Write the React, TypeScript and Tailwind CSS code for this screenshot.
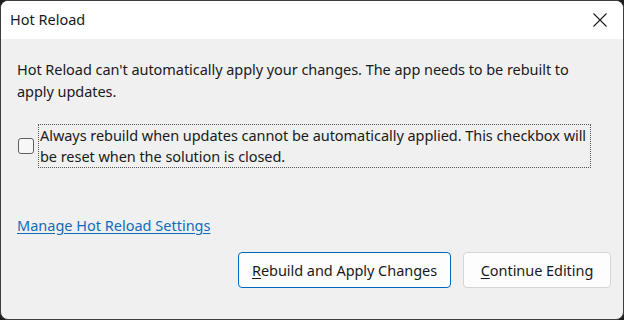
import React from "react";

const font = { fontFamily: '"Noto Sans", "Open Sans", sans-serif' };

const CloseIcon = () => (
  <svg width="16" height="16" viewBox="0 0 16 16" className="text-[#1a1a1a]">
    <path d="M1.5 1.5 L14.5 14.5 M14.5 1.5 L1.5 14.5" stroke="currentColor" strokeWidth="1.1" fill="none" />
  </svg>
);

export default function App() {
  return (
    <div className="w-[624px] h-[320px] bg-[#1c1c1c]" style={font}>
      <div className="w-full h-full flex flex-col rounded-[8px] border border-[#3d3d3d] overflow-hidden bg-[#f0f0f0]">
        {/* title bar */}
        <div className="h-[38px] bg-white flex items-center justify-between pl-[9px] pr-[15px] shrink-0">
          <span className="text-[14.5px] text-[#1a1a1a]">Hot Reload</span>
          <CloseIcon />
        </div>

        {/* body */}
        <div className="flex-1 flex flex-col pl-[16px] pr-[12px] pt-[19px] text-[14.5px] tracking-[-0.05px] leading-[22px] text-[#1a1a1a]">
          <p className="w-[580px]">
            Hot Reload can't automatically apply your changes. The app needs to be rebuilt to apply updates.
          </p>

          <div className="flex items-center mt-[22px]">
            <div className="w-[16px] h-[16px] rounded-[3px] border border-[#5f5f5f] bg-[#f7f7f7] shrink-0 ml-[1px]" />
            <div className="ml-[4px] w-[553px] border border-dotted border-[#555] px-[1px] leading-[21px]">
              Always rebuild when updates cannot be automatically applied. This checkbox will be reset when the solution is closed.
            </div>
          </div>

          <a href="#" className="mt-[46px] self-start text-[#0f6cbd] underline underline-offset-[2px] tracking-[0px]">
            Manage Hot Reload Settings
          </a>

          <div className="flex justify-end gap-[12px] mt-[16px]">
            <button className="h-[36px] w-[213px] rounded-[4px] border border-[#0067c0] bg-[#fdfdfd] text-[14.5px] text-[#1a1a1a]">
              <span className="underline underline-offset-[2px]">R</span>ebuild and Apply Changes
            </button>
            <button className="h-[36px] w-[148px] rounded-[4px] border border-[#d5d5d5] bg-[#fdfdfd] text-[14.5px] text-[#1a1a1a]">
              <span className="underline underline-offset-[2px]">C</span>ontinue Editing
            </button>
          </div>
        </div>
      </div>
    </div>
  );
}
